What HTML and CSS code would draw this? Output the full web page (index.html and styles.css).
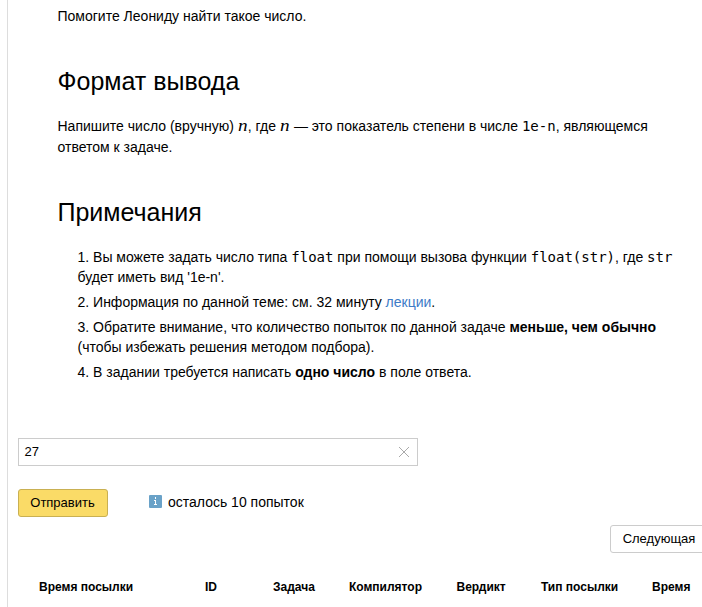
FILE: index.html
```html
<!DOCTYPE html>
<html lang="ru">
<head>
<meta charset="utf-8">
<title>Задача</title>
<link rel="stylesheet" href="styles.css">
</head>
<body>
<main class="page">
  <article class="statement">
    <p class="intro">Помогите Леониду найти такое число.</p>
    <h2>Формат вывода</h2>
    <p class="output">Напишите число (вручную) <i class="math">n</i>, где <i class="math">n</i> — это показатель степени в числе <code>1e-n</code>, являющемся ответом к задаче.</p>
    <h2>Примечания</h2>
    <ol class="notes">
      <li>Вы можете задать число типа <code>float</code> при помощи вызова функции <code>float(str)</code>, где <code>str</code> будет иметь вид '1e-n'.</li>
      <li>Информация по данной теме: см. 32 минуту <a>лекции</a>.</li>
      <li>Обратите внимание, что количество попыток по данной задаче <b>меньше, чем обычно</b> (чтобы избежать решения методом подбора).</li>
      <li>В задании требуется написать <b>одно число</b> в поле ответа.</li>
    </ol>
  </article>
  <div class="field">
    <span>27</span>
    <svg width="12" height="12" viewBox="0 0 12 12"><path d="M1 1l10 10M11 1L1 11" stroke="#aaa" fill="none"/></svg>
  </div>
  <div class="actions">
    <button class="submit">Отправить</button>
    <svg class="info" width="13" height="13" viewBox="0 0 13 13"><rect width="13" height="13" rx="1" fill="#6aa2c8"/><path d="M6 2h1v2H6zM5 5h2v4h1v1H5V9h1V6H5z" fill="#fff"/></svg>
    <span class="left">осталось 10 попыток</span>
  </div>
  <div class="pager"><button class="next">Следующая</button></div>
  <div class="table">
    <span>Время посылки</span><span>ID</span><span>Задача</span><span>Компилятор</span><span>Вердикт</span><span>Тип посылки</span><span>Время</span>
  </div>
</main>
</body>
</html>
```
FILE: styles.css
```css
* { box-sizing: border-box; }
body { margin: 0; background: #fff; color: #000; font: 14px/20px "Liberation Sans", Arial, sans-serif; overflow: hidden; }
.page { margin-left: 7px; height: 607px; border-left: 1px solid #ddd; padding-left: 10px; }
.statement { padding: 6px 0 0 39.5px; height: 438px; }
p { margin: 0; }
h2 { margin: 0; font-weight: 400; font-size: 25px; line-height: 30px; }
.intro { height: 60px; }
.output { margin-top: 20px; height: 81px; width: 610px; line-height: 21px; }
.notes { list-style: none; counter-reset: n; margin: 20px 0 0; padding: 0 0 0 20px; width: 642px; }
.notes li { counter-increment: n; margin-bottom: 5px; }
.notes li::before { content: counter(n) ". "; }
code { font: 14px/14px "DejaVu Sans Mono", monospace; }
.math { display: inline-block; width: 10.1px; font: italic 16px/14px "Liberation Serif", serif; transform: scaleX(1.2); transform-origin: left; }
a { color: #3d7bc7; }
.field { display: flex; align-items: center; justify-content: space-between; width: 400px; height: 28px; border: 1px solid #ccc; padding: 0 7px 0 5.5px; font-size: 13px; }
.actions { display: flex; align-items: center; height: 28px; margin-top: 23px; }
button { font: 13px "Liberation Sans", Arial, sans-serif; color: #000; height: 28px; padding: 0 0 2px; border-radius: 3px; }
.submit { width: 90px; padding-right: 1px; background: #fadb67; border: 1px solid #c9b052; }
.info { margin: 0 6px 3px 41px; }
.left { padding-bottom: 2px; }
.pager { display: flex; justify-content: flex-end; margin-top: 8px; }
.next { flex: none; width: 98px; margin-right: -6px; background: #fff; border: 1px solid #ccc; }
.table { display: grid; grid-template-columns: 166px 68px 76px 107.5px 84.5px 111px 60px; margin: 24px 0 0 21px; font-size: 12px; font-weight: 700; white-space: nowrap; }
```
